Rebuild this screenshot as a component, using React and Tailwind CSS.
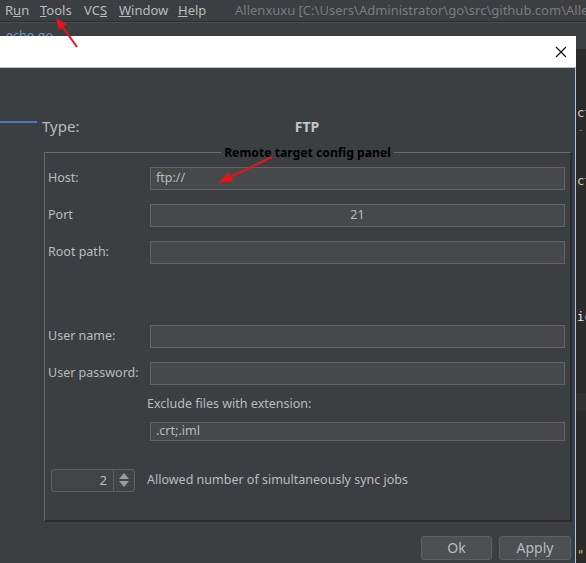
import React from "react";

function Input({ value, center }) {
  return (
    <div
      className={`flex-1 h-[23px] bg-[#45494a] border border-[#646464] flex items-center px-[5px] text-[#bbbbbb] ${center ? "justify-center" : ""}`}
    >
      {value}
    </div>
  );
}

function Row({ label, value, center, className = "" }) {
  return (
    <div className={`flex items-center pr-[5px] ${className}`}>
      <div className="w-[105px] shrink-0 pl-[3px] whitespace-nowrap">{label}</div>
      <Input value={value} center={center} />
    </div>
  );
}

export default function App() {
  const codeLines = {
    3: (
      <>
        <span className="text-[#e6c9a0]">c</span>
        <span className="text-[#6fb3e8]">t</span>
      </>
    ),
    4: <span className="text-[#6a6a6a]">- -</span>,
    7: (
      <>
        <span className="text-[#e6c9a0]">c</span>
        <span className="text-[#6fb3e8]">t</span>
      </>
    ),
    15: (
      <>
        <span className="text-[#e8e8e8]">i</span>
        <span className="text-[#a9c8e8]">c</span>
      </>
    ),
    29: <span className="text-[#d8c040]">"</span>,
  };
  const lines = Array.from({ length: 31 }, (_, i) => i);

  return (
    <div className="relative w-[586px] h-[563px] overflow-hidden bg-[#3c3f41] font-['Noto_Sans',sans-serif] text-[12.5px] text-[#bbbbbb] leading-none">
      {/* Menu bar */}
      <div className="h-[22px] flex items-center border-b border-[#2d2f30] pl-[5px] text-[13px] overflow-hidden">
        <div className="w-[35px] shrink-0">
          R<span className="underline">u</span>n
        </div>
        <div className="w-[44px] shrink-0">
          <span className="underline">T</span>ools
        </div>
        <div className="w-[35px] shrink-0">
          VC<span className="underline">S</span>
        </div>
        <div className="w-[59px] shrink-0">
          <span className="underline">W</span>indow
        </div>
        <div className="w-[57px] shrink-0">
          <span className="underline">H</span>elp
        </div>
        <div className="whitespace-nowrap shrink-0 text-[#7a7c7e]">
          Allenxuxu [C:\Users\Administrator\go\src\github.com\Allenxuxu]
        </div>
      </div>
      {/* Tab bar */}
      <div className="h-[28px] flex items-center pl-[6px] border-b border-[#2b2b2b] border-t border-t-[#4a4c4e]">
        <span className="text-[#6d96c8]">echo.go</span>
      </div>
      {/* Editor */}
      <div className="bg-[#2b2b2b] h-[513px] pt-[3px] font-['DejaVu_Sans_Mono',monospace] text-[12px]">
        {lines.map((i) => (
          <div
            key={i}
            className={`h-[17px] flex items-center pl-[577px] whitespace-nowrap ${i === 20 ? "bg-[#323232]" : ""}`}
          >
            {codeLines[i] || ""}
          </div>
        ))}
      </div>

      {/* Dialog window */}
      <div className="absolute left-0 top-[36px] w-[576px] h-[527px] flex flex-col">
        <div className="h-[31px] bg-white flex items-center justify-end pr-[9px]">
          <svg width="12" height="12" viewBox="0 0 12 12">
            <path d="M1 1 L11 11 M11 1 L1 11" stroke="#111" strokeWidth="1.2" />
          </svg>
        </div>
        <div className="flex-1 bg-[#3c3f41] border-t border-r border-[#a9c3e2] flex flex-col">
          <div className="flex mt-[48px]">
            <div className="w-[37px] pt-[5px]">
              <div className="h-[1.5px] bg-[#4a78c2]" />
            </div>
            <div className="w-[5px]" />
          </div>
          <div className="flex flex-col pl-[42px] pr-[3px] -mt-[6px]">
            <div className="h-[20px] grid grid-cols-[1fr_auto_1fr] items-center">
              <div className="text-[15px]">Type:</div>
              <div className="text-[14px] font-bold text-[#c4c4c4]">FTP</div>
              <div />
            </div>
            {/* Group box */}
            <div className="relative ml-[2px] mt-[15px] h-[370px] border-t border-l border-[#6b6b6b] border-r-2 border-b-2 border-r-[#2b2b2b] border-b-[#2b2b2b] flex flex-col">
              <div className="absolute -top-[8px] left-0 right-0 flex justify-center">
                <span className="bg-[#3c3f41] px-[3px] text-black font-bold text-[12.2px] font-['Noto_Sans',sans-serif] leading-[15px]">
                  Remote target config panel
                </span>
              </div>
              <Row label="Host:" value="ftp://" className="mt-[14px]" />
              <Row label="Port" value="21" center className="mt-[14px]" />
              <Row label="Root path:" value="" className="mt-[14px]" />
              <Row label="User name:" value="" className="mt-[61px]" />
              <Row label="User password:" value="" className="mt-[14px]" />
              <div className="mt-[11px] h-[18px] flex items-center pl-[102px]">
                Exclude files with extension:
              </div>
              <div className="mt-[8px] flex pl-[105px] pr-[5px]">
                <div className="flex-1 h-[19px] bg-[#45494a] border border-[#646464] flex items-center px-[5px]">
                  .crt;.iml
                </div>
              </div>
              <div className="mt-[28px] flex items-center pl-[6px]">
                <div className="w-[84px] h-[23px] rounded-[3px] border border-[#5e6060] bg-[#414445] flex">
                  <div className="flex-1 flex items-center justify-end pr-[6px] text-[13px]">2</div>
                  <div className="w-[21px] border-l border-[#5e6060] flex flex-col items-center justify-center gap-[2px]">
                    <svg width="10" height="6" viewBox="0 0 10 6">
                      <path d="M0 6 L5 0 L10 6 Z" fill="#9a9c9e" />
                    </svg>
                    <svg width="10" height="6" viewBox="0 0 10 6">
                      <path d="M0 0 L5 6 L10 0 Z" fill="#9a9c9e" />
                    </svg>
                  </div>
                </div>
                <div className="ml-[12px] whitespace-nowrap">
                  Allowed number of simultaneously sync jobs
                </div>
              </div>
            </div>
            <div className="mt-[14px] flex justify-end gap-[7px] pr-[1px]">
              <div className="w-[71px] h-[24px] rounded-[3px] border border-[#5e6060] bg-[#4c5052] flex items-center justify-center text-[14px]">
                Ok
              </div>
              <div className="w-[72px] h-[24px] rounded-[3px] border border-[#5e6060] bg-[#4c5052] flex items-center justify-center text-[14px]">
                Apply
              </div>
            </div>
          </div>
        </div>
      </div>

      {/* Annotation arrows */}
      <svg className="absolute inset-0 pointer-events-none" width="586" height="563" viewBox="0 0 586 563">
        <line x1="77" y1="47" x2="62" y2="26" stroke="#e8141b" strokeWidth="2" />
        <path d="M56 18 L67 24 L59 30 Z" fill="#e8141b" />
        <line x1="272" y1="157" x2="230" y2="177" stroke="#e8141b" strokeWidth="2" />
        <path d="M218 183 L229 172 L233 181 Z" fill="#e8141b" />
      </svg>
    </div>
  );
}
